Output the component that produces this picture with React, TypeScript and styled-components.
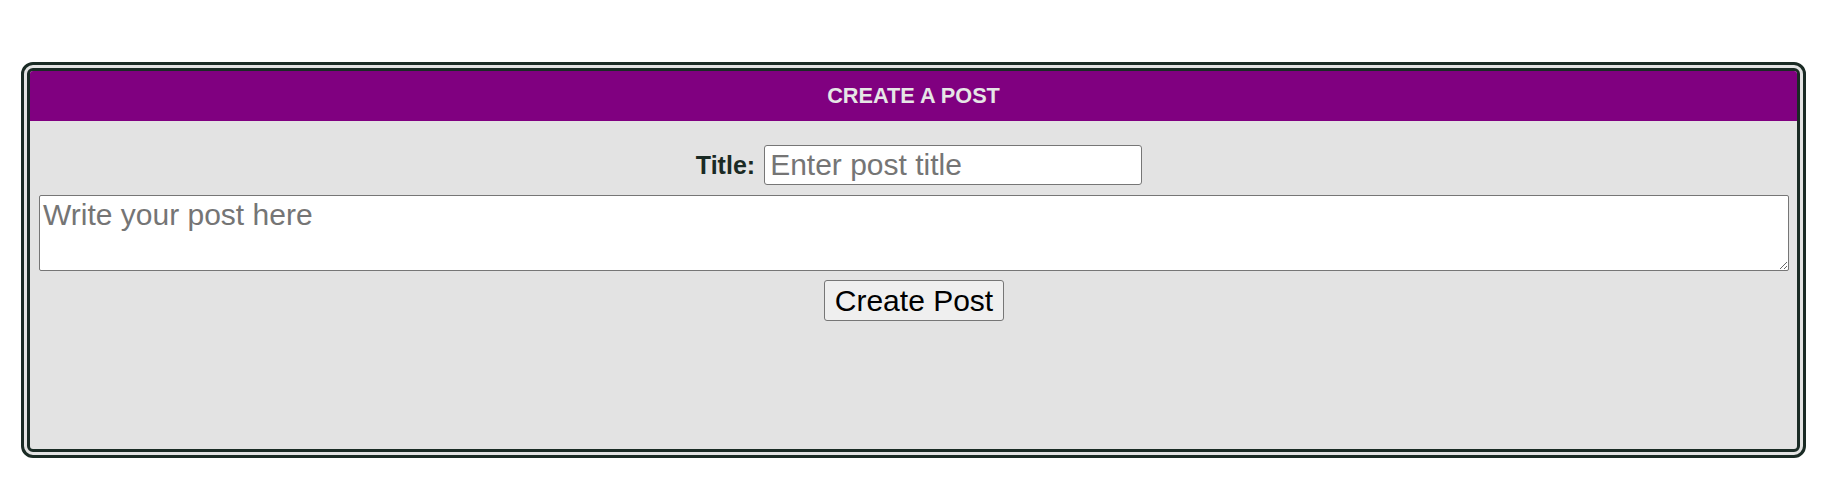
import React from "react";
import styled, { createGlobalStyle } from "styled-components";

const GlobalStyle = createGlobalStyle`
  html, body {
    margin: 0;
    padding: 0;
    background: #ffffff;
    font-family: "Liberation Sans", Arial, sans-serif;
  }
`;

const Page = styled.div`
  padding: 62px 37px 0 21px;
`;

const Card = styled.section`
  box-sizing: border-box;
  height: 396px;
  border: 9px double #1a2b25;
  border-radius: 12px;
  background: #e3e3e3;
  overflow: hidden;
  display: flex;
  flex-direction: column;
`;

const Header = styled.h2`
  margin: 0;
  height: 50px;
  background: #800080;
  color: #e6e6e6;
  font-size: 21.7px;
  font-weight: bold;
  display: flex;
  align-items: center;
  justify-content: center;
`;

const Form = styled.form`
  display: flex;
  flex-direction: column;
  align-items: center;
  padding: 24px 8px 0 9px;
`;

const TitleRow = styled.div`
  display: flex;
  align-items: center;
  gap: 9px;
  margin-left: 10px;
`;

const Label = styled.label`
  font-size: 25px;
  font-weight: bold;
  color: #1a2a24;
`;

const TitleInput = styled.input`
  box-sizing: border-box;
  width: 378px;
  height: 40px;
  padding: 1px 5px;
  border: 1px solid #767676;
  border-radius: 3px;
  background: #ffffff;
  font-family: "Liberation Sans", Arial, sans-serif;
  font-size: 30px;
  color: #000;
  &::placeholder {
    color: #757575;
  }
`;

const Body = styled.textarea`
  box-sizing: border-box;
  align-self: stretch;
  height: 76px;
  margin-top: 10px;
  padding: 2px 3px;
  border: 1px solid #767676;
  border-radius: 2px;
  background: #ffffff;
  font-family: "Liberation Sans", Arial, sans-serif;
  font-size: 30px;
  color: #000;
  &::placeholder {
    color: #757575;
  }
`;

const SubmitButton = styled.button`
  box-sizing: border-box;
  margin-top: 9px;
  height: 41px;
  padding: 0 10px;
  border: 1px solid #767676;
  border-radius: 3px;
  background: #efefef;
  font-family: "Liberation Sans", Arial, sans-serif;
  font-size: 30px;
  color: #000;
`;

export default function App() {
  return (
    <>
      <GlobalStyle />
      <Page>
        <Card>
          <Header>CREATE A POST</Header>
          <Form onSubmit={(e) => e.preventDefault()}>
            <TitleRow>
              <Label htmlFor="title">Title:</Label>
              <TitleInput id="title" placeholder="Enter post title" />
            </TitleRow>
            <Body placeholder="Write your post here" />
            <SubmitButton type="submit">Create Post</SubmitButton>
          </Form>
        </Card>
      </Page>
    </>
  );
}
